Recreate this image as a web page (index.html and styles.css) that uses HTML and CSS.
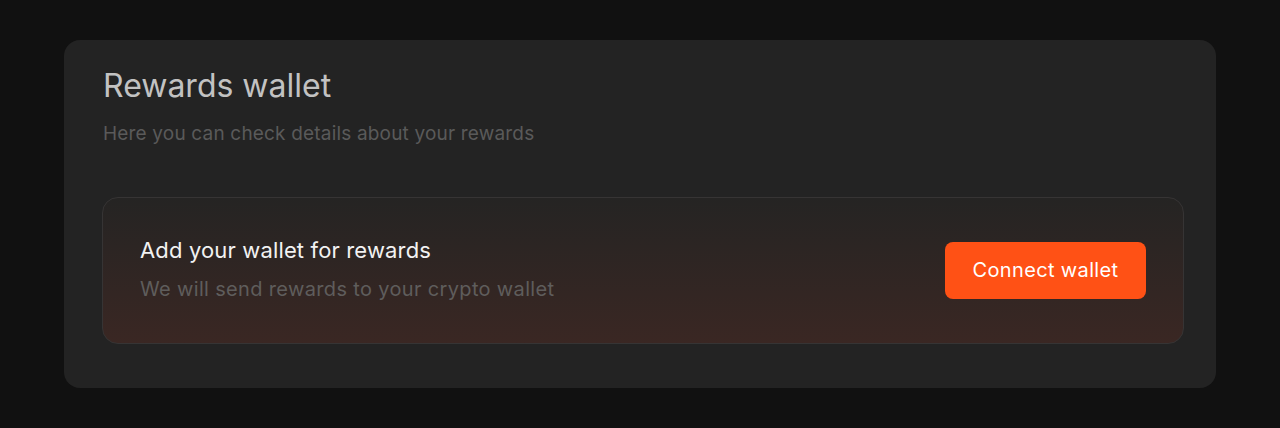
FILE: index.html
```html
<!DOCTYPE html>
<html lang="en">
<head>
<meta charset="utf-8">
<title>Rewards wallet</title>
<link rel="stylesheet" href="styles.css">
</head>
<body>
<main class="page">
  <section class="card">
    <h1 class="card-title">Rewards wallet</h1>
    <p class="card-subtitle">Here you can check details about your rewards</p>
    <div class="wallet-box">
      <div class="wallet-text">
        <h2 class="wallet-title">Add your wallet for rewards</h2>
        <p class="wallet-desc">We will send rewards to your crypto wallet</p>
      </div>
      <button class="connect-btn" type="button">Connect wallet</button>
    </div>
  </section>
</main>
</body>
</html>
```
FILE: styles.css
```css
* { box-sizing: border-box; }
html, body {
  margin: 0;
  padding: 0;
  background: #111111;
  font-family: Inter, "Liberation Sans", Arial, sans-serif;
}
.page {
  padding: 40px 64px;
}
.card {
  background: #232323;
  border-radius: 16px;
  padding: 26px 32px 44px 39px;
}
.card-title {
  margin: 0;
  font-size: 32px;
  line-height: 40px;
  font-weight: 400;
  color: #c2c2c2;
}
.card-subtitle {
  margin: 16px 0 0;
  font-size: 19px;
  line-height: 24px;
  letter-spacing: 0.18px;
  color: #5a5a5a;
}
.wallet-box {
  margin: 51px 0 0 -1px;
  height: 147px;
  border: 1px solid #363434;
  border-radius: 16px;
  background: linear-gradient(180deg, #252423 0%, #3a2723 100%);
  display: flex;
  align-items: center;
  justify-content: space-between;
  padding: 0 37px 0 37px;
}
.wallet-text {
  margin-bottom: 4px;
}
.wallet-title {
  margin: 0;
  font-size: 22px;
  line-height: 26px;
  font-weight: 400;
  letter-spacing: 0.15px;
  color: #f2f2f2;
}
.wallet-desc {
  margin: 14px 0 0;
  font-size: 20px;
  line-height: 24px;
  letter-spacing: 0.34px;
  color: #5f5d5c;
}
.connect-btn {
  width: 201px;
  height: 57px;
  border: none;
  border-radius: 8px;
  background: #ff5115;
  color: #ffffff;
  font-family: inherit;
  font-size: 20px;
  letter-spacing: 0.35px;
  padding: 0 0 2px;
}
```
